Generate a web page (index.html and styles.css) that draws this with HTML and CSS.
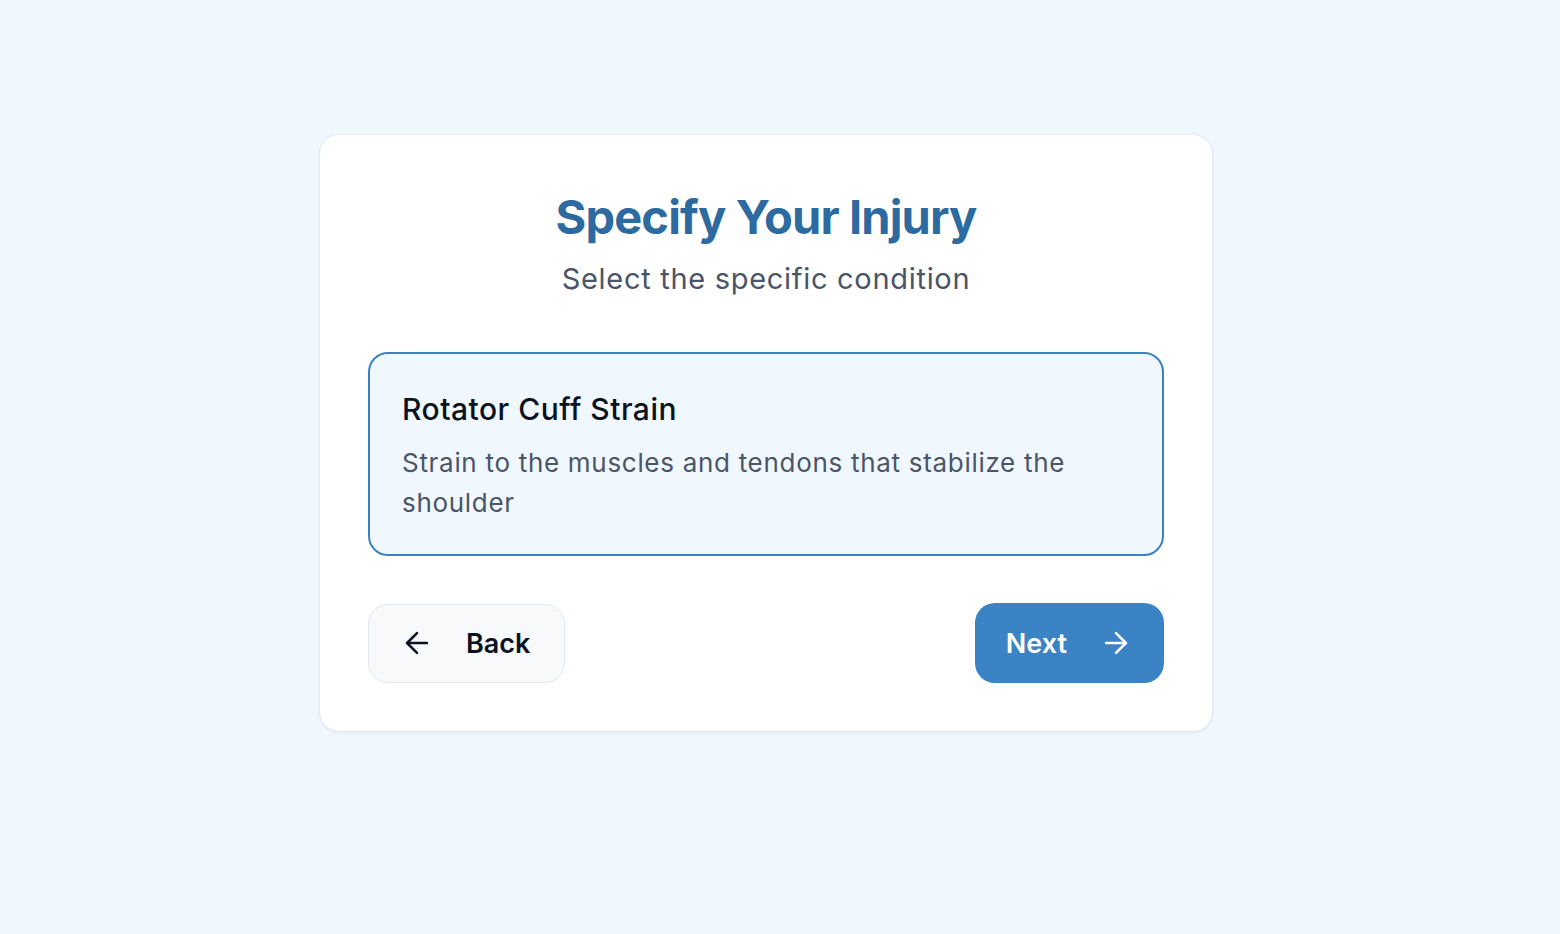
FILE: index.html
```html
<!DOCTYPE html>
<html lang="en">
<head>
<meta charset="utf-8">
<title>Specify Your Injury</title>
<link rel="stylesheet" href="styles.css">
</head>
<body>
<main class="page">
  <section class="card">
    <header class="header">
      <h1 class="title">Specify Your Injury</h1>
      <p class="subtitle">Select the specific condition</p>
    </header>
    <div class="option">
      <h2 class="option-title">Rotator Cuff Strain</h2>
      <p class="option-desc">Strain to the muscles and tendons that stabilize the shoulder</p>
    </div>
    <div class="actions">
      <button class="btn btn-back" type="button">
        <svg class="icon" viewBox="0 0 24 24" fill="none" stroke="currentColor" stroke-width="1.8" stroke-linecap="round" stroke-linejoin="round"><path d="m12 19-7-7 7-7"/><path d="M19 12H5"/></svg>
        <span>Back</span>
      </button>
      <button class="btn btn-next" type="button">
        <span>Next</span>
        <svg class="icon" viewBox="0 0 24 24" fill="none" stroke="currentColor" stroke-width="1.8" stroke-linecap="round" stroke-linejoin="round"><path d="M5 12h14"/><path d="m12 5 7 7-7 7"/></svg>
      </button>
    </div>
  </section>
</main>
</body>
</html>
```

FILE: styles.css
```css
* { box-sizing: border-box; }
html, body { margin: 0; padding: 0; }
body {
  background: #f0f7fe;
  font-family: Inter, "Noto Sans", "Liberation Sans", sans-serif;
  min-height: 934px;
}
.page {
  display: flex;
  justify-content: center;
  align-items: flex-start;
  padding: 134px 28px 0 0;
}
.card {
  width: 894px;
  background: #ffffff;
  border: 1px solid #e2e8f0;
  border-radius: 20px;
  padding: 48px;
  box-shadow: 0 1px 3px rgba(15, 23, 42, 0.06);
}
.header { text-align: center; }
.title {
  margin: 0;
  font-size: 47px;
  line-height: 68px;
  font-weight: 700;
  color: #2c6aa0;
  letter-spacing: -0.85px;
}
.subtitle {
  margin: 8px 0 0;
  font-size: 29px;
  line-height: 40px;
  color: #4a5568;
  letter-spacing: 0.7px;
}
.option {
  margin-top: 53px;
  background: #f0f7fe;
  border: 2px solid #3b82c4;
  border-radius: 20px;
  padding: 36px 32px 31px;
}
.option-title {
  margin: 0;
  font-size: 30px;
  line-height: 39px;
  font-weight: 500;
  color: #0b1220;
  letter-spacing: 0.5px;
}
.option-desc {
  margin: 14px 0 0;
  font-size: 26px;
  line-height: 40px;
  color: #4a5568;
  letter-spacing: 0.7px;
}
.actions {
  margin-top: 47px;
  display: flex;
  justify-content: space-between;
  align-items: center;
}
.btn {
  display: flex;
  align-items: center;
  gap: 32px;
  height: 80px;
  padding: 0 31px;
  border-radius: 20px;
  font-family: inherit;
  font-size: 27px;
  font-weight: 600;
  cursor: pointer;
}
.btn-back {
  height: 79px;
  padding: 0 34px 0 31px;
  background: #f7f9fb;
  border: 1px solid #e2e8f0;
  color: #0b1220;
}
.btn-next {
  background: #3a83c4;
  border: none;
  color: #ffffff;
}
.icon { width: 34px; height: 34px; flex: none; }
```
